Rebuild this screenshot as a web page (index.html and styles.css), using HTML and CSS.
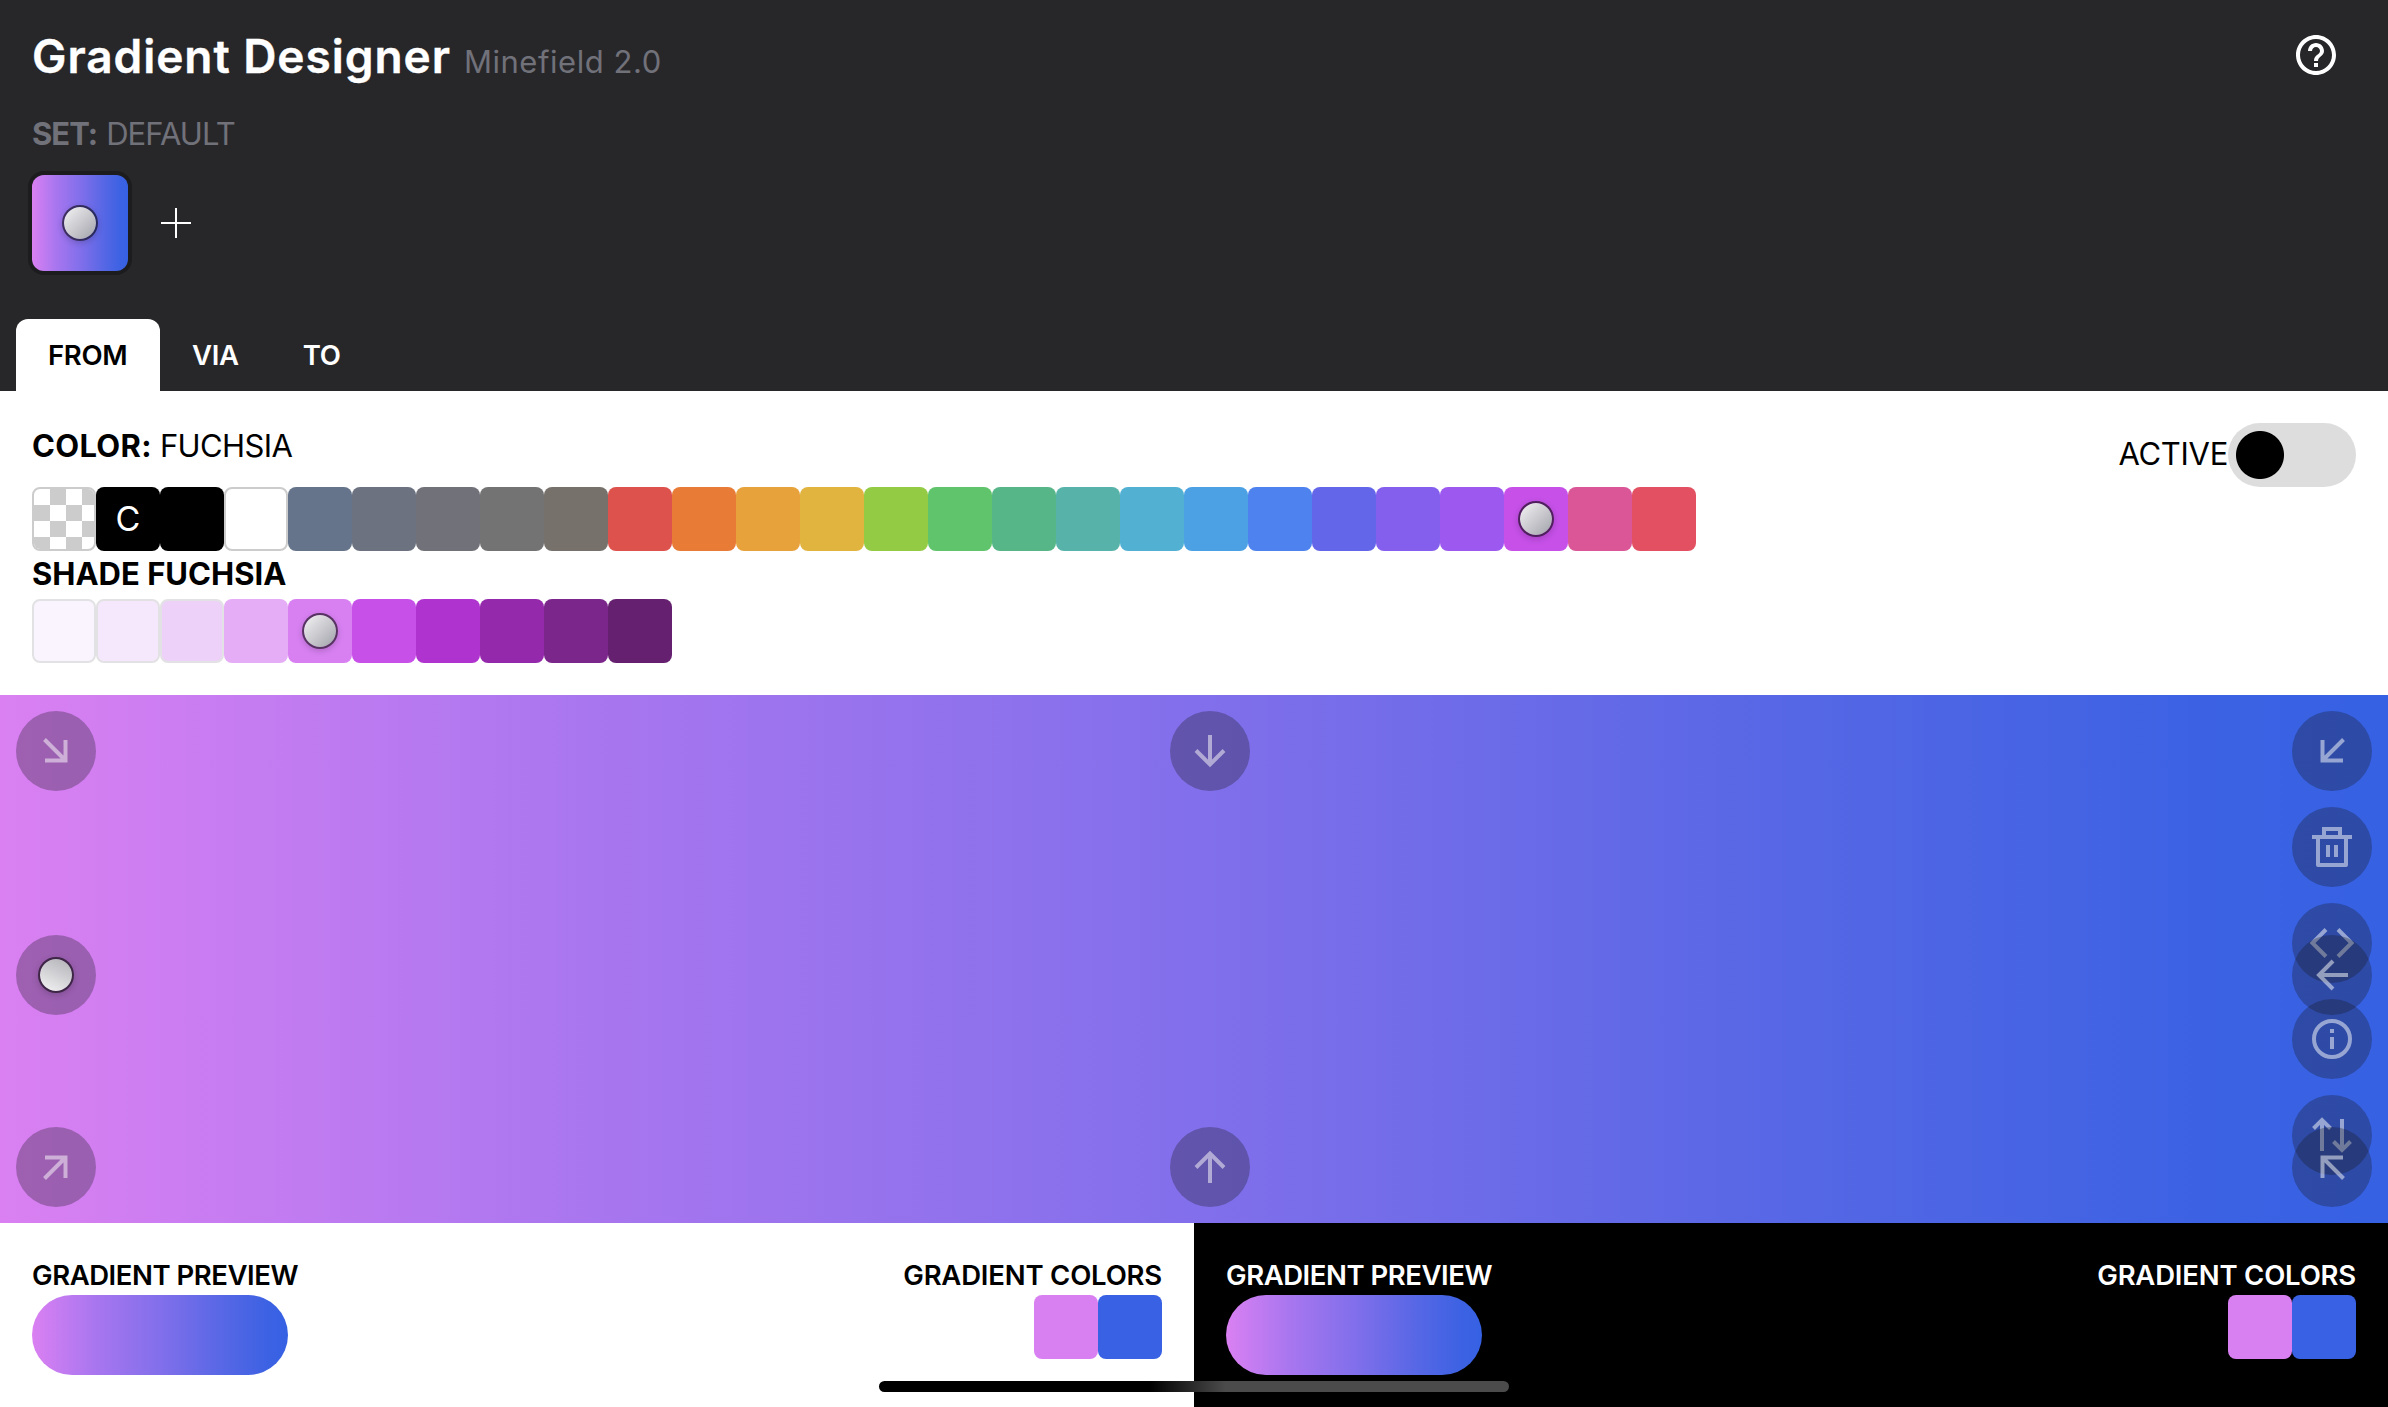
FILE: index.html
```html
<!DOCTYPE html>
<html lang="en">
<head>
<meta charset="utf-8">
<title>Gradient Designer</title>
<link rel="stylesheet" href="styles.css">
</head>
<body>
<header class="header">
  <div class="title-row">
    <div class="brand"><h1 class="title"><span class="t t-title">Gradient Designer</span></h1><span class="t version">Minefield 2.0</span></div>
    <svg class="help" viewBox="0 0 24 24"><path fill="currentColor" d="M11 18h2v-2h-2v2zm1-16C6.480 2 2 6.480 2 12s4.480 10 10 10 10-4.480 10-10S17.520 2 12 2zm0 18c-4.410 0-8-3.590-8-8s3.590-8 8-8 8 3.590 8 8-3.590 8-8 8zm0-14c-2.210 0-4 1.790-4 4h2c0-1.100.9-2 2-2s2 .9 2 2c0 2-3 1.750-3 5h2c0-2.250 3-2.500 3-5 0-2.210-1.790-4-4-4z"/></svg>
  </div>
  <div class="set-label"><b class="t t-set">SET:</b><span class="t t-default">DEFAULT</span></div>
  <div class="set-row">
    <div class="thumb gradient"><i class="knob"></i></div>
    <svg class="plus" viewBox="0 0 30 30"><path d="M15 0v30M0 15h30" stroke="#fff" stroke-width="2"/></svg>
  </div>
  <nav class="tabs">
    <div class="tab tab-active"><span class="t t-from">FROM</span></div>
    <div class="tab"><span class="t t-via">VIA</span></div>
    <div class="tab"><span class="t t-to">TO</span></div>
  </nav>
</header>

<section class="panel">
  <div class="panel-head">
    <div class="label"><b class="t t-color">COLOR:</b><span class="t t-fuchsia">FUCHSIA</span></div>
    <div class="active"><span class="t t-active">ACTIVE</span><div class="toggle"></div></div>
  </div>
  <div class="swatches">
    <div class="sw checker"></div><div class="sw black"><span class="t-c">C</span></div><div class="sw black"></div><div class="sw white"></div>
    <div class="sw slate"></div><div class="sw gray"></div><div class="sw zinc"></div><div class="sw neutral"></div><div class="sw stone"></div>
    <div class="sw red"></div><div class="sw orange"></div><div class="sw amber"></div><div class="sw yellow"></div><div class="sw lime"></div><div class="sw green"></div><div class="sw emerald"></div><div class="sw teal"></div><div class="sw cyan"></div><div class="sw sky"></div><div class="sw blue"></div><div class="sw indigo"></div><div class="sw violet"></div><div class="sw purple"></div><div class="sw fuchsia"><i class="knob"></i></div><div class="sw pink"></div><div class="sw rose"></div>
  </div>
  <div class="label shade-label"><b class="t t-shade">SHADE FUCHSIA</b></div>
  <div class="swatches">
    <div class="sw f50"></div><div class="sw f100"></div><div class="sw f200"></div><div class="sw f300"></div><div class="sw from"><i class="knob"></i></div><div class="sw fuchsia"></div><div class="sw f600"></div><div class="sw f700"></div><div class="sw f800"></div><div class="sw f900"></div>
  </div>
</section>

<main class="stage gradient">
  <div class="tools">
    <div class="btn hidden"></div>
    <div class="btn"><svg viewBox="0 0 48 48"><path class="fillp" d="M14 4h20v8h10v4h-4v26a2 2 0 0 1-2 2H10a2 2 0 0 1-2-2V16H4v-4h10zM18 8v4h12V8zM12 16v24h24V16zM18 22h4v12h-4zM26 22h4v12h-4z"/></svg></div>
    <div class="btn"><svg viewBox="0 0 48 48"><path class="line" d="M18 10.500L4.500 24L18 37.500M30 10.500L43.500 24L30 37.500"/></svg></div>
    <div class="btn"><svg viewBox="0 0 48 48"><circle class="line" cx="24" cy="24" r="18"/><path class="fillp" d="M22 14h4v4h-4zM22 22h4v12h-4z"/></svg></div>
    <div class="btn"><svg viewBox="0 0 48 48"><path class="line" d="M14 40V9M5.500 17.500L14 9l8.500 8.500M34 8v31M25.500 30.500L34 39l8.500-8.500"/></svg></div>
  </div>
  <div class="btn dir tl"><svg viewBox="0 0 48 48"><path class="line" d="M12.500 12.500L33 33M13 33.500H33.500V13"/></svg></div>
  <div class="btn dir tc"><svg viewBox="0 0 48 48"><path class="line" d="M24 8V37M10 23.500L24 37.500L38 23.500"/></svg></div>
  <div class="btn dir tr"><svg viewBox="0 0 48 48"><path class="line" d="M35.500 12.500L15 33M14.500 13V33.500H35"/></svg></div>
  <div class="btn dir ml"><i class="knob knob-up"></i></div>
  <div class="btn dir mr"><svg viewBox="0 0 48 48"><path class="line" d="M40 24H11M25 10L11 24L25 38"/></svg></div>
  <div class="btn dir bl"><svg viewBox="0 0 48 48"><path class="line" d="M12.500 35.500L33 15M13 14.500H33.500V35"/></svg></div>
  <div class="btn dir bc"><svg viewBox="0 0 48 48"><path class="line" d="M24 40V11M10 24.500L24 10.500L38 24.500"/></svg></div>
  <div class="btn dir br"><svg viewBox="0 0 48 48"><path class="line" d="M35.500 35.500L15 15M14.500 35V14.500H35"/></svg></div>
</main>

<footer class="footer">
  <section class="half">
    <div><div class="caption"><span class="t t-prev">GRADIENT PREVIEW</span></div><div class="pill gradient"></div></div>
    <div class="right"><div class="caption"><span class="t t-cols">GRADIENT COLORS</span></div><div class="swatches"><div class="sw from"></div><div class="sw to"></div></div></div>
  </section>
  <section class="half dark">
    <div><div class="caption"><span class="t t-prev">GRADIENT PREVIEW</span></div><div class="pill gradient"></div></div>
    <div class="right"><div class="caption"><span class="t t-cols">GRADIENT COLORS</span></div><div class="swatches"><div class="sw from"></div><div class="sw to"></div></div></div>
  </section>
  <div class="home-bar"></div>
</footer>
</body>
</html>
```
FILE: styles.css
```css
* { box-sizing: border-box; }
body { margin: 0; width: 2388px; height: 1407px; overflow: hidden; background: #fff; color: #000; font-family: Inter, "Noto Sans", sans-serif; font-size: 31px; }
.t { white-space: nowrap; }
.t-title { letter-spacing: .95px; }
.version { letter-spacing: .55px; }
.t-set { letter-spacing: -1px; }
.t-default { letter-spacing: -.9px; }
.t-from { letter-spacing: -.3px; }
.t-via, .t-to { letter-spacing: -.3px; }
.t-color { letter-spacing: .3px; }
.t-fuchsia { letter-spacing: -.6px; }
.t-active { letter-spacing: -.3px; }
.t-prev { letter-spacing: -.45px; }
.t-cols { letter-spacing: -.2px; }
.gradient { background: linear-gradient(to right, rgb(218,128,242), rgb(168,118,239) 25%, rgb(130,111,235) 50%, rgb(86,103,229) 75%, rgb(60,98,227) 92%, rgb(54,97,227)); }
.knob { display: block; width: 36px; height: 36px; border-radius: 50%; border: 2px solid rgba(0,0,0,.6); background: linear-gradient(135deg, #f4f4f5, #a1a1aa); background-clip: padding-box; box-shadow: 0 2px 6px rgba(0,0,0,.18); }
.knob-up { background: linear-gradient(25deg, #f4f4f5, #b0b0b6); background-clip: padding-box; }

.header { display: flex; flex-direction: column; height: 391px; background: #27272a; color: #fff; }
.title-row { display: flex; justify-content: space-between; height: 112px; padding: 0 48px 0 32px; line-height: 112px; }
.brand { display: flex; align-items: baseline; gap: 13px; }
.title { margin: 0; font-size: 46px; font-weight: 600; -webkit-text-stroke: .4px #fff; }
.version { color: #71717a; }
.help { width: 48px; height: 48px; margin-top: 31px; color: #fff; }
.set-label { display: flex; gap: 9px; height: 63px; padding-left: 32px; line-height: 44px; color: #71717a; }
b { font-weight: 700; }
.set-row { display: flex; align-items: center; gap: 33px; height: 96px; padding-left: 32px; }
.thumb { display: flex; align-items: center; justify-content: center; width: 96px; height: 96px; border-radius: 12px; box-shadow: 0 0 0 4px #1c1c1f; }
.plus { width: 30px; height: 30px; }
.tabs { display: flex; margin: 48px 0 0 16px; height: 72px; font-size: 27.500px; font-weight: 600; line-height: 72px; }
.tab { padding: 0 32px; }
.tab-active { width: 144px; background: #fff; color: #000; border-radius: 12px 12px 0 0; }

.panel { height: 304px; padding: 32px 32px 0; }
.panel-head { display: flex; justify-content: space-between; height: 64px; }
.label { display: flex; gap: 8px; line-height: 46px; }
.shade-label { height: 48px; }
.active { display: flex; align-items: center; line-height: 64px; }
.t-active { padding-bottom: 2px; }
.toggle { width: 128px; height: 64px; border-radius: 32px; background: radial-gradient(circle at 32px 32px, #000 23.500px, #ddd 24.500px); }
.swatches { display: flex; height: 64px; }
.sw { display: flex; align-items: center; justify-content: center; width: 64px; height: 64px; border-radius: 8px; }
.checker { border: 2px solid #ccc; background: repeating-conic-gradient(#ccc 0 25%, #fff 0 50%) 0 0 / 32px 32px padding-box; }
.t-c { margin-top: -2px; color: #fff; font-size: 34px; }
.black { background: #000; }
.white { border: 2px solid #ccc; background: #fff; }
.slate { background: rgb(102,116,139); }
.gray { background: rgb(108,114,127); }
.zinc { background: rgb(113,113,122); }
.neutral { background: rgb(115,115,115); }
.stone { background: rgb(119,113,108); }
.red { background: rgb(221,82,76); }
.orange { background: rgb(232,124,55); }
.amber { background: rgb(232,162,60); }
.yellow { background: rgb(225,180,64); }
.lime { background: rgb(148,203,69); }
.green { background: rgb(96,196,108); }
.emerald { background: rgb(87,182,136); }
.teal { background: rgb(87,179,169); }
.cyan { background: rgb(82,177,211); }
.sky { background: rgb(75,161,227); }
.blue { background: rgb(78,130,238); }
.indigo { background: rgb(99,102,233); }
.violet { background: rgb(132,94,237); }
.purple { background: rgb(157,89,239); }
.fuchsia { background: rgb(198,80,232); }
.pink { background: rgb(218,86,151); }
.rose { background: rgb(226,80,98); }
.f50, .f100, .f200 { border: 2px solid #e2e2e4; }
.f50 { background: rgb(250,244,254); }
.f100 { background: rgb(246,232,252); }
.f200 { background: rgb(238,209,249); }
.f300 { background: rgb(229,173,246); }
.from { background: rgb(216,128,242); }
.f600 { background: rgb(175,51,206); }
.f700 { background: rgb(148,41,171); }
.f800 { background: rgb(122,38,138); }
.f900 { background: rgb(101,33,112); }
.to { background: rgb(56,98,227); }

.stage { position: relative; height: 528px; }
.tools { display: flex; flex-direction: column; align-items: flex-end; gap: 16px; padding: 16px 16px 0; }
.btn { display: flex; align-items: center; justify-content: center; width: 80px; height: 80px; border-radius: 50%; background: rgba(24,24,27,.3); }
.btn svg { width: 48px; height: 48px; opacity: .5; }
.line { fill: none; stroke: #fff; stroke-width: 4; }
.fillp { fill: #fff; fill-rule: evenodd; }
.hidden { visibility: hidden; }
.dir { position: absolute; }
.tl, .ml, .bl { left: 16px; }
.tc, .bc { left: 1170px; }
.tr, .mr, .br { right: 16px; }
.tl, .tc, .tr { top: 16px; }
.ml, .mr { top: 240px; }
.bl, .bc, .br { bottom: 16px; }

.footer { position: relative; display: flex; height: 184px; }
.half { display: flex; flex: 1; justify-content: space-between; padding: 32px 32px 0; }
.dark { background: #000; color: #fff; }
.caption { height: 40px; line-height: 40px; font-size: 27.500px; font-weight: 600; }
.pill { width: 256px; height: 80px; border-radius: 40px; }
.right { display: flex; flex-direction: column; align-items: flex-end; }
.home-bar { position: absolute; left: 879px; top: 158px; width: 630px; height: 11px; border-radius: 6px; background: linear-gradient(to right, #000 0 43%, #4b4b4b 55%); }
```
